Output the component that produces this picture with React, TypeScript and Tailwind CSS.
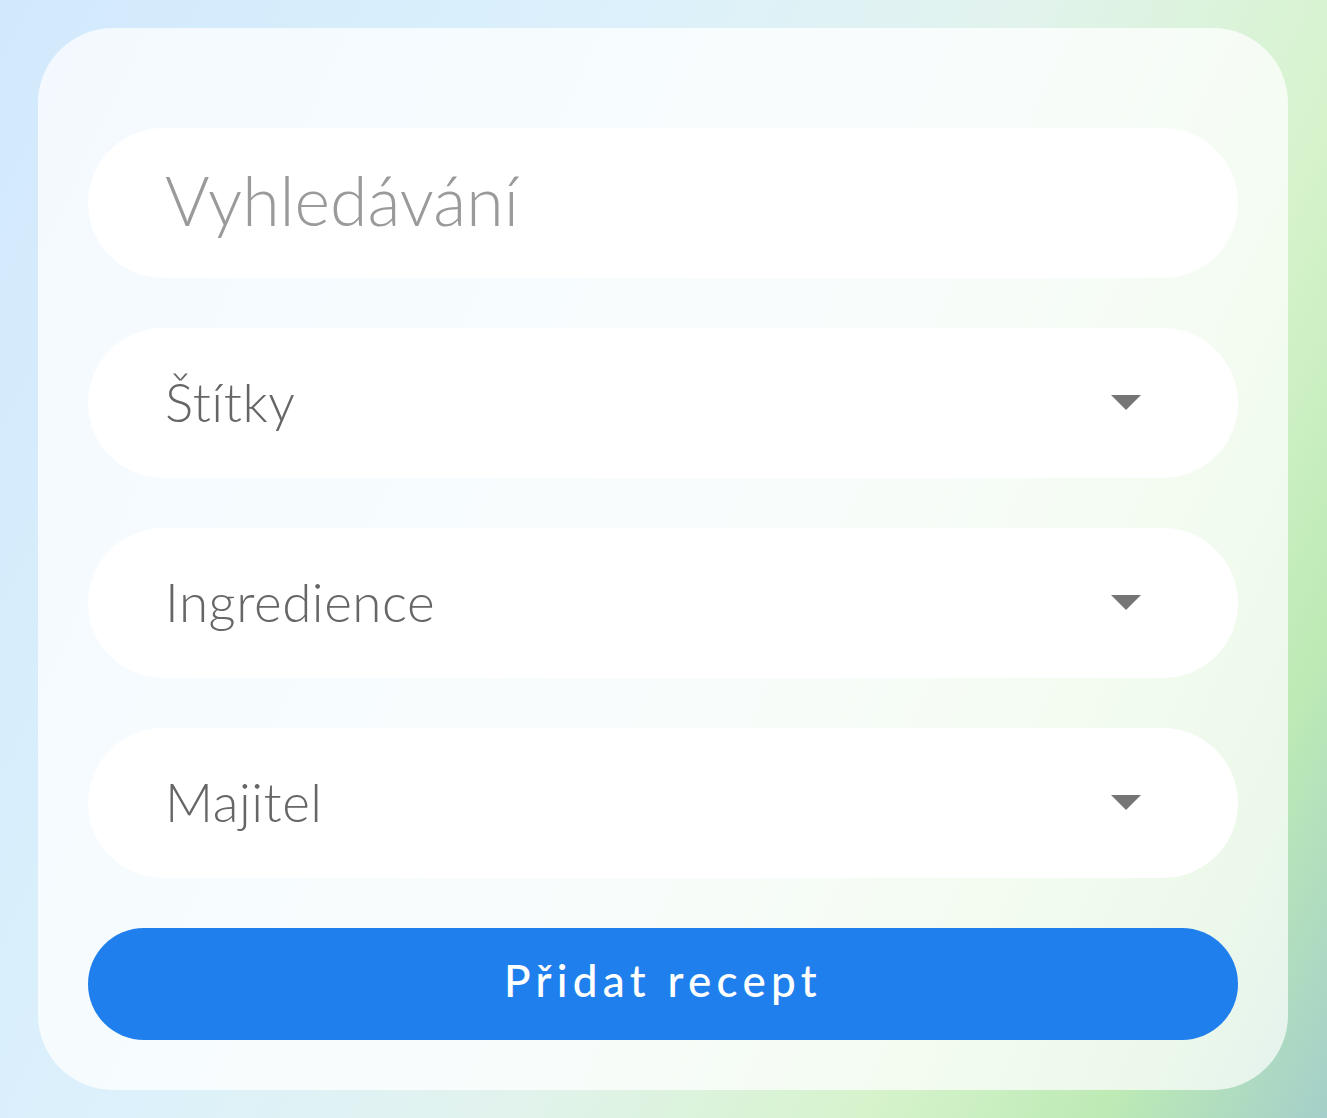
const Caret = () => (
  <svg width="30" height="16" viewBox="0 0 30 16" className="shrink-0">
    <path d="M0 0 L30 0 L15 15 Z" fill="#757575" />
  </svg>
)

const SelectRow = ({ label }: { label: string }) => (
  <div className="flex items-center justify-between h-[150px] w-full rounded-full bg-white pl-[77px] pr-[97px]">
    <span className="text-[53px] font-light text-[#666666] leading-none tracking-[0.01em] pb-[3px]">{label}</span>
    <Caret />
  </div>
)

export default function App() {
  return (
    <div
      className="min-h-screen w-full flex pl-[38px] py-[28px] bg-[linear-gradient(115deg,#d2e9fd_0%,#dcf1fb_35%,#e2f3ee_55%,#d6f3cc_75%,#bdeab5_88%,#a4cfca_100%)]"
      style={{ fontFamily: "Lato, 'Noto Sans', sans-serif" }}
    >
      <div className="w-[1250px] h-[1062px] rounded-[75px] bg-[linear-gradient(115deg,rgba(255,255,255,0.72),rgba(255,255,255,0.78)_50%,rgba(255,255,255,0.7))] px-[50px] pt-[100px] pb-[50px] flex flex-col gap-[50px]">
        <div className="flex items-center h-[150px] w-full rounded-full bg-white pl-[77px]">
          <span className="text-[68px] font-light text-[#9a9a9a] leading-none pb-[6px]">Vyhledávání</span>
        </div>
        <SelectRow label="Štítky" />
        <SelectRow label="Ingredience" />
        <SelectRow label="Majitel" />
        <button className="h-[112px] w-full rounded-full bg-[#1e7fed] text-white text-[44px] font-medium tracking-[0.12em] flex items-center justify-center pb-[8px]">
          Přidat recept
        </button>
      </div>
    </div>
  )
}
